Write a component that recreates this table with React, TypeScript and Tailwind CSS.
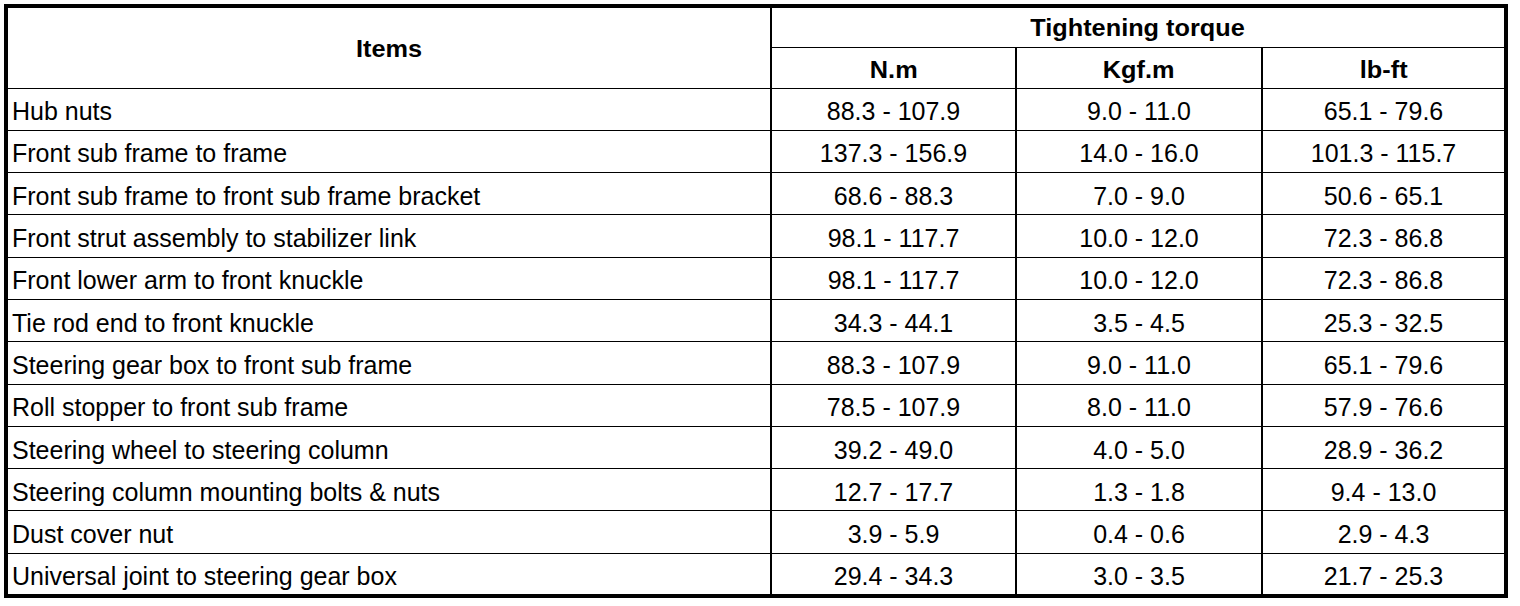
const rows: [string, string, string, string][] = [
  ["Hub nuts", "88.3 - 107.9", "9.0 - 11.0", "65.1 - 79.6"],
  ["Front sub frame to frame", "137.3 - 156.9", "14.0 - 16.0", "101.3 - 115.7"],
  ["Front sub frame to front sub frame bracket", "68.6 - 88.3", "7.0 - 9.0", "50.6 - 65.1"],
  ["Front strut assembly to stabilizer link", "98.1 - 117.7", "10.0 - 12.0", "72.3 - 86.8"],
  ["Front lower arm to front knuckle", "98.1 - 117.7", "10.0 - 12.0", "72.3 - 86.8"],
  ["Tie rod end to front knuckle", "34.3 - 44.1", "3.5 - 4.5", "25.3 - 32.5"],
  ["Steering gear box to front sub frame", "88.3 - 107.9", "9.0 - 11.0", "65.1 - 79.6"],
  ["Roll stopper to front sub frame", "78.5 - 107.9", "8.0 - 11.0", "57.9 - 76.6"],
  ["Steering wheel to steering column", "39.2 - 49.0", "4.0 - 5.0", "28.9 - 36.2"],
  ["Steering column mounting bolts & nuts", "12.7 - 17.7", "1.3 - 1.8", "9.4 - 13.0"],
  ["Dust cover nut", "3.9 - 5.9", "0.4 - 0.6", "2.9 - 4.3"],
  ["Universal joint to steering gear box", "29.4 - 34.3", "3.0 - 3.5", "21.7 - 25.3"],
];

function HeadText({ children }: { children: string }) {
  return <span className="inline-block scale-x-[1.1] font-bold text-[23px] leading-none">{children}</span>;
}

export default function App() {
  return (
    <div className="w-[1520px] h-[606px] bg-white pt-[4px] pl-[4px] font-['Liberation_Sans',Arial,sans-serif] text-black">
      <table className="w-[1500px] table-fixed border-collapse border-[4px] border-black">
        <colgroup>
          <col className="w-[765px]" />
          <col className="w-[245px]" />
          <col className="w-[246px]" />
          <col className="w-[244px]" />
        </colgroup>
        <thead>
          <tr className="h-[41px]">
            <th rowSpan={2} className="border-x-2 border-y border-black text-center align-middle pt-[6px]">
              <HeadText>Items</HeadText>
            </th>
            <th colSpan={3} className="border-x-2 border-y border-black text-center align-middle pt-[6px]">
              <HeadText>Tightening torque</HeadText>
            </th>
          </tr>
          <tr className="h-[41px]">
            <th className="border-x-2 border-y border-black text-center align-middle pt-[8px]">
              <HeadText>N.m</HeadText>
            </th>
            <th className="border-x-2 border-y border-black text-center align-middle pt-[8px]">
              <HeadText>Kgf.m</HeadText>
            </th>
            <th className="border-x-2 border-y border-black text-center align-middle pt-[8px]">
              <HeadText>lb-ft</HeadText>
            </th>
          </tr>
        </thead>
        <tbody className="text-[25px]">
          {rows.map((r) => (
            <tr key={r[0]} className="h-[42.3px]">
              <td className="border-x-2 border-y border-black pl-[4px] pt-[5px] leading-none whitespace-nowrap">{r[0]}</td>
              <td className="border-x-2 border-y border-black text-center pt-[5px] leading-none">{r[1]}</td>
              <td className="border-x-2 border-y border-black text-center pt-[5px] leading-none">{r[2]}</td>
              <td className="border-x-2 border-y border-black text-center pt-[5px] leading-none">{r[3]}</td>
            </tr>
          ))}
        </tbody>
      </table>
    </div>
  );
}
